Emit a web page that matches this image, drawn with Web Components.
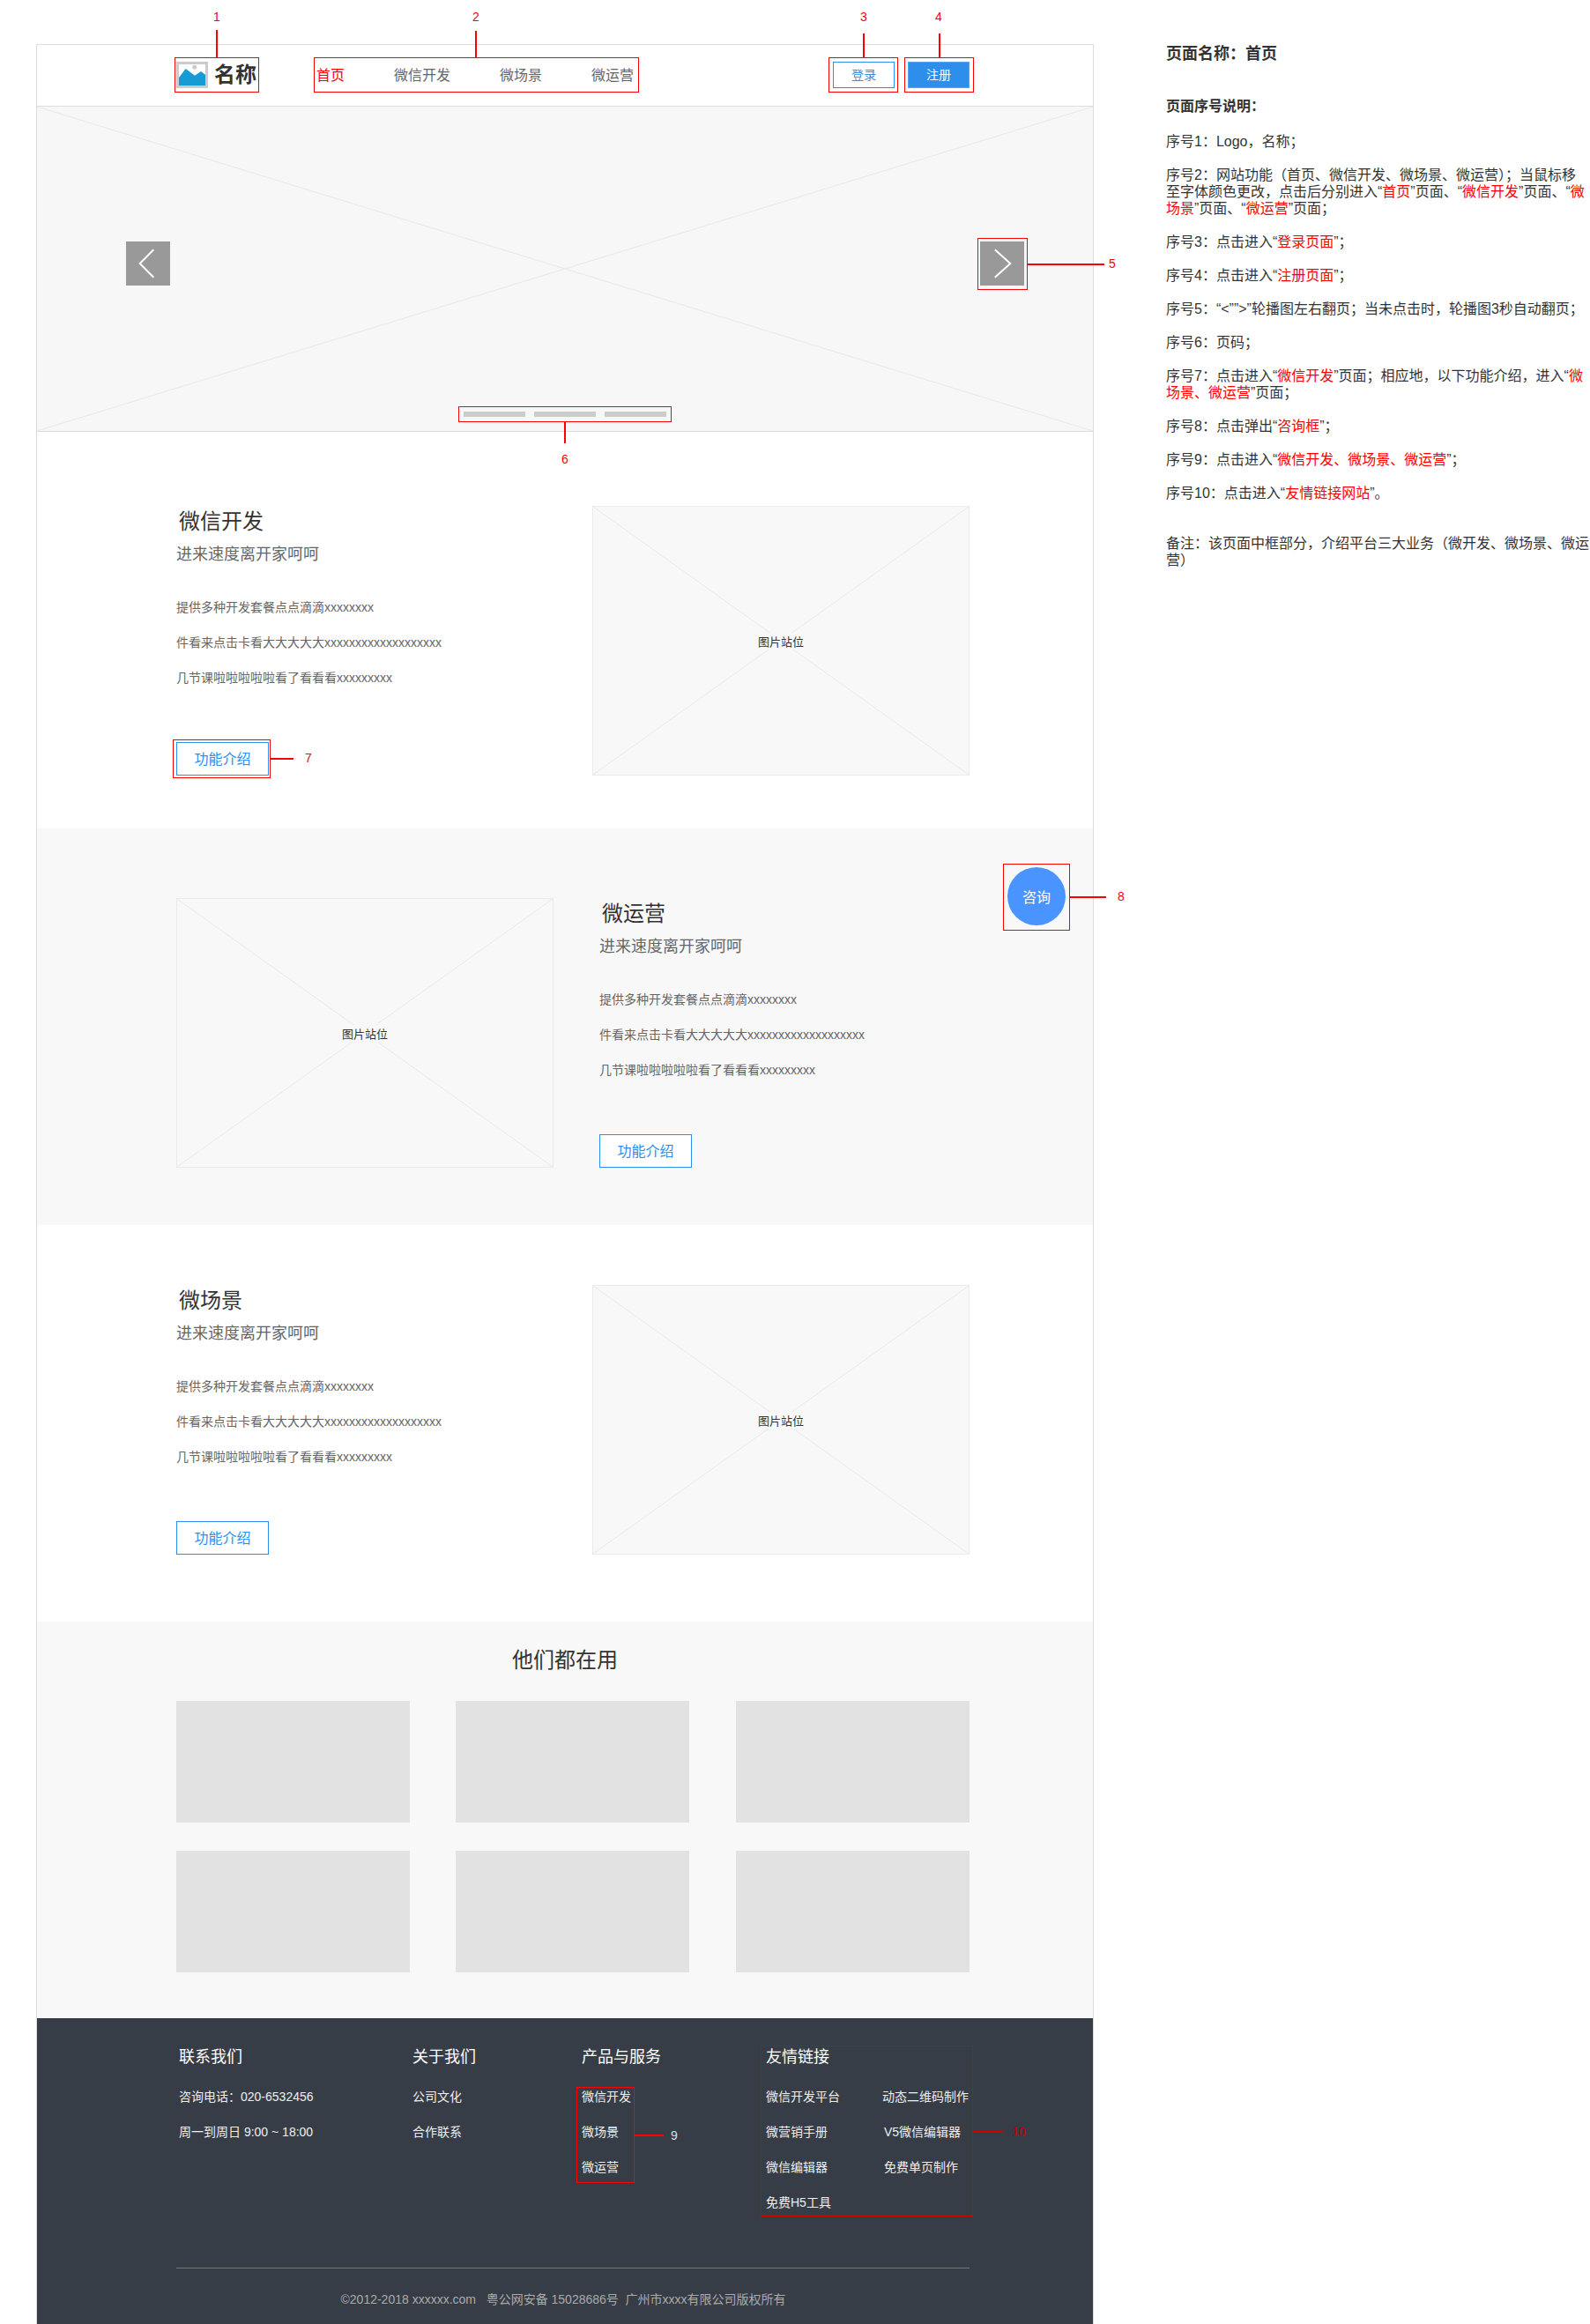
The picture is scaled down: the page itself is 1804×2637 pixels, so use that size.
<!DOCTYPE html>
<html lang="zh-CN">
<head>
<meta charset="utf-8">
<title>首页</title>
<style>
  html, body { margin: 0; padding: 0; background: #fff; }
  body {
    font-family: "Liberation Sans", "Noto Sans CJK SC", sans-serif;
    color: #333;
    width: 1804px;
    height: 2637px;
    overflow: hidden;
    position: relative;
  }
  .sheet { display: flex; align-items: flex-start; }
</style>
</head>
<body>
<div class="sheet">
  <site-frame>
    <site-header></site-header>
    <hero-carousel></hero-carousel>
    <feature-section pad-top="84" pad-bottom="60">
      <span slot="title">微信开发</span>
    </feature-section>
    <feature-section reverse pad-top="79" pad-bottom="65">
      <span slot="title">微运营</span>
    </feature-section>
    <feature-section pad-top="68" pad-bottom="76">
      <span slot="title">微场景</span>
    </feature-section>
    <client-wall></client-wall>
    <site-footer></site-footer>
    <consult-bubble></consult-bubble>
  </site-frame>
  <page-notes></page-notes>
</div>

<!-- red annotation marks, they float over the wireframe -->
<anno-mark box="198,65,96,40" line="246,34,246,65" label="1" at="246,19"></anno-mark>
<anno-mark box="356,65,369,40" line="540,35,540,65" label="2" at="540,19"></anno-mark>
<anno-mark box="940,65,79,40" line="980,38,980,65" label="3" at="980,19"></anno-mark>
<anno-mark box="1026,65,79,40" line="1066,38,1066,65" label="4" at="1065,19"></anno-mark>
<anno-mark box="1109,270,57,59" line="1166,300,1253,300" label="5" at="1262,299"></anno-mark>
<anno-mark box="520,461,242,18" line="641,479,641,503" label="6" at="641,521"></anno-mark>
<anno-mark box="196,839,111,44" line="307,861,333,861" label="7" at="350,860"></anno-mark>
<anno-mark box="1138,980,76,76" line="1214,1018,1255,1018" label="8" at="1272,1017"></anno-mark>
<anno-mark box="654,2368,66,109" line="720,2423,753,2423" label="9" at="765,2423" label-color="#ddd"></anno-mark>
<anno-mark box="863,2321,241,194" line="1104,2419,1138,2419" label="10" at="1156,2419" color="#d40000" label-color="#c00000"></anno-mark>

<script>
const cross = `<svg class="cross" preserveAspectRatio="none" viewBox="0 0 100 100">
  <path d="M0 0L100 100M100 0L0 100" fill="none" stroke="#e8e8e8" stroke-width="1" vector-effect="non-scaling-stroke"/></svg>`;

class SiteFrame extends HTMLElement {
  constructor() {
    super();
    this.attachShadow({ mode: "open" }).innerHTML = `
      <style>
        :host {
          display: block;
          position: relative;
          box-sizing: border-box;
          width: 1200px;
          height: 2587px;
          margin: 50px 0 0 41px;
          border: 1px solid #ddd;
          border-bottom: 0;
          flex: none;
        }
      </style>
      <slot></slot>`;
  }
}

class SiteHeader extends HTMLElement {
  constructor() {
    super();
    this.attachShadow({ mode: "open" }).innerHTML = `
      <style>
        :host {
          display: flex;
          align-items: center;
          box-sizing: border-box;
          height: 70px;
          padding: 0 140px 2px 158px;
          border-bottom: 1px solid #ddd;
          background: #fff;
        }
        .logo { display: flex; align-items: center; width: 159px; flex: none; }
        .logo svg { width: 36px; height: 30px; display: block; }
        .logo b { font-size: 24px; margin-left: 7px; color: #333; line-height: 30px; }
        nav { display: flex; gap: 56px; margin-top: 2px; font-size: 16px; color: #666; line-height: 30px; }
        nav .on { color: #f00; }
        .btns { margin-left: auto; display: flex; gap: 15px; }
        .btn {
          box-sizing: border-box;
          width: 70px;
          height: 30px;
          border: 1px solid #2d8eec;
          color: #2d8eec;
          font-size: 14px;
          line-height: 28px;
          text-align: center;
          background: #fff;
        }
        .btn.solid { background: #2d8eec; border-color: #55a5f0; color: #fff; }
      </style>
      <div class="logo">
        <svg viewBox="0 0 36 30">
          <rect x="1.500" y="1.500" width="33" height="27" fill="#fff" stroke="#ccc" stroke-width="3"/>
          <path d="M3 18L10.700 8L21 15.700L28 11L33 14.700V27H3Z" fill="#169bd5"/>
          <circle cx="20.700" cy="6.300" r="2.500" fill="#ccc"/>
        </svg>
        <b>名称</b>
      </div>
      <nav><span class="on">首页</span><span>微信开发</span><span>微场景</span><span>微运营</span></nav>
      <div class="btns">
        <div class="btn">登录</div>
        <div class="btn solid">注册</div>
      </div>`;
  }
}

class HeroCarousel extends HTMLElement {
  constructor() {
    super();
    this.attachShadow({ mode: "open" }).innerHTML = `
      <style>
        :host {
          display: block;
          position: relative;
          box-sizing: border-box;
          height: 369px;
          background: #f7f7f7;
          border-bottom: 1px solid #ddd;
        }
        .cross { position: absolute; inset: 0; width: 100%; height: 100%; display: block; }
        .arrow { position: absolute; top: 153px; width: 50px; height: 50px; background: #999; display: block; }
        .prev { left: 101px; }
        .next { right: 78px; }
        .pager { position: absolute; left: 484px; top: 346px; display: flex; gap: 10px; }
        .pager i { display: block; width: 70px; height: 6px; background: #ccc; }
      </style>
      ${cross}
      <svg class="arrow prev" viewBox="0 0 50 50"><path d="M31.300 9.300L15.700 25L31.300 40.700" fill="none" stroke="#fff" stroke-width="2"/></svg>
      <svg class="arrow next" viewBox="0 0 50 50"><path d="M16.800 9.300L34.300 25L16.800 40.700" fill="none" stroke="#fff" stroke-width="2"/></svg>
      <div class="pager"><i></i><i></i><i></i></div>`;
  }
}

class FeatureSection extends HTMLElement {
  constructor() {
    super();
    const reverse = this.hasAttribute("reverse");
    const top = this.getAttribute("pad-top");
    const bottom = this.getAttribute("pad-bottom");
    const copy = `
      <div class="copy">
        <h2><slot name="title"></slot></h2>
        <h3>进来速度离开家呵呵</h3>
        <ul>
          <li>提供多种开发套餐点点滴滴xxxxxxxx</li>
          <li>件看来点击卡看大大大大大xxxxxxxxxxxxxxxxxxx</li>
          <li>几节课啦啦啦啦啦看了看看看xxxxxxxxx</li>
        </ul>
        <div class="more">功能介绍</div>
      </div>`;
    const pic = `<div class="pic">${cross}<span>图片站位</span></div>`;
    this.attachShadow({ mode: "open" }).innerHTML = `
      <style>
        :host {
          display: grid;
          grid-template-columns: ${reverse ? "428px 470px" : "472px 428px"};
          padding: ${top}px 0 ${bottom}px 158px;
          background: ${reverse ? "#f8f8f8" : "#fff"};
        }
        .copy { padding-left: ${reverse ? 52 : 0}px; }
        h2 { margin: 1px 0 0 3px; font-size: 24px; font-weight: 400; line-height: 34px; color: #333; }
        h3 { margin: 7px 0 0; font-size: 18px; font-weight: 400; line-height: 26px; color: #666; }
        ul { margin: 27px 0 0; padding: 0; list-style: none; font-size: 14px; line-height: 40px; color: #666; }
        .more {
          box-sizing: border-box;
          width: 105px;
          height: 38px;
          margin-top: 53px;
          border: 1px solid #2d8eec;
          background: #fff;
          color: #2d8eec;
          font-size: 16px;
          line-height: 37px;
          text-align: center;
        }
        .pic {
          position: relative;
          box-sizing: border-box;
          height: 306px;
          background: #f8f8f8;
          border: 1px solid #ebebeb;
          display: flex;
          align-items: center;
          justify-content: center;
          font-size: 13px;
          color: #333;
        }
        .pic .cross { position: absolute; inset: 0; width: 100%; height: 100%; display: block; }
        .pic span { position: relative; background: #f8f8f8; padding: 0 1px; }
      </style>
      ${reverse ? pic + copy : copy + pic}`;
  }
}

class ClientWall extends HTMLElement {
  constructor() {
    super();
    this.attachShadow({ mode: "open" }).innerHTML = `
      <style>
        :host { display: block; box-sizing: border-box; height: 450px; padding: 26px 140px 0 158px; background: #f8f8f8; }
        h2 { margin: 0 18px 0 0; font-size: 24px; font-weight: 400; line-height: 36px; text-align: center; color: #333; }
        .grid { display: grid; grid-template-columns: 317px 318px 265px; row-gap: 32px; margin-top: 28px; }
        .grid i { display: block; width: 265px; height: 138px; background: #e2e2e2; }
      </style>
      <h2>他们都在用</h2>
      <div class="grid"><i></i><i></i><i></i><i></i><i></i><i></i></div>`;
  }
}

class SiteFooter extends HTMLElement {
  constructor() {
    super();
    this.attachShadow({ mode: "open" }).innerHTML = `
      <style>
        :host { display: block; box-sizing: border-box; height: 347px; padding: 31px 140px 0 158px; background: #373d46; color: #fff; }
        .cols { display: flex; height: 252px; }
        .col { flex: none; padding-left: 3px; box-sizing: border-box; }
        h4 { margin: 0 0 12px; font-size: 18px; font-weight: 400; line-height: 26px; color: #fff; }
        .row { font-size: 14px; line-height: 40px; color: #eee; white-space: nowrap; }
        .two { display: grid; grid-template-columns: 132px auto; }
        .hr { height: 1px; background: #777; }
        .copy { margin-top: 20px; margin-left: 186.500px; font-size: 14px; line-height: 30px; color: #aaa; white-space: pre; }
      </style>
      <div class="cols">
        <div class="col" style="width:265px"><h4>联系我们</h4>
          <div class="row">咨询电话：020-6532456</div>
          <div class="row">周一到周日 9:00 ~ 18:00</div></div>
        <div class="col" style="width:192px"><h4>关于我们</h4>
          <div class="row">公司文化</div>
          <div class="row">合作联系</div></div>
        <div class="col" style="width:209px"><h4>产品与服务</h4>
          <div class="row">微信开发</div>
          <div class="row">微场景</div>
          <div class="row">微运营</div></div>
        <div class="col" style="width:231px"><h4>友情链接</h4>
          <div class="two">
            <div class="row">微信开发平台</div><div class="row">动态二维码制作</div>
            <div class="row">微营销手册</div><div class="row" style="padding-left:2px">V5微信编辑器</div>
            <div class="row">微信编辑器</div><div class="row" style="padding-left:2px">免费单页制作</div>
            <div class="row">免费H5工具</div>
          </div></div>
      </div>
      <div class="hr"></div>
      <div class="copy">©2012-2018 xxxxxx.com   粤公网安备 15028686号  广州市xxxx有限公司版权所有</div>`;
  }
}

class ConsultBubble extends HTMLElement {
  constructor() {
    super();
    this.attachShadow({ mode: "open" }).innerHTML = `
      <style>
        :host {
          position: absolute;
          left: 1101px;
          top: 933px;
          width: 66px;
          height: 66px;
          border-radius: 50%;
          background: #4a94ff;
          color: #fff;
          font-size: 16px;
          display: flex;
          align-items: center;
          justify-content: center;
        }
      </style>
      咨询`;
  }
}

class PageNotes extends HTMLElement {
  constructor() {
    super();
    this.attachShadow({ mode: "open" }).innerHTML = `
      <style>
        :host {
          display: block;
          box-sizing: border-box;
          width: 482px;
          margin-left: 82px;
          padding-top: 50px;
          font-size: 16px;
          line-height: 19px;
          color: #333;
          flex: none;
        }
        h1 { margin: 0; font-size: 18px; line-height: 22px; font-weight: 700; }
        h2 { margin: 38px 0 0; font-size: 16px; line-height: 22px; font-weight: 700; }
        p { margin: 19px 0 0; }
        p.first { margin-top: 19px; }
        p.memo { margin-top: 38px; }
        em { font-style: normal; color: #f00; }
      </style>
      <h1>页面名称：首页</h1>
      <h2>页面序号说明：</h2>
      <p class="first">序号1：Logo，名称；</p>
      <p>序号2：网站功能（首页、微信开发、微场景、微运营）；当鼠标移<br>至字体颜色更改，点击后分别进入“<em>首页</em>”页面、“<em>微信开发</em>”页面、“<em>微</em><br><em>场景</em>”页面、“<em>微运营</em>”页面；</p>
      <p>序号3：点击进入“<em>登录页面</em>”；</p>
      <p>序号4：点击进入“<em>注册页面</em>”；</p>
      <p>序号5：“&lt;””&gt;”轮播图左右翻页；当未点击时，轮播图3秒自动翻页；</p>
      <p>序号6：页码；</p>
      <p>序号7：点击进入“<em>微信开发</em>”页面；相应地，以下功能介绍，进入“<em>微</em><br><em>场景、微运营</em>”页面；</p>
      <p>序号8：点击弹出“<em>咨询框</em>”；</p>
      <p>序号9：点击进入“<em>微信开发、微场景、微运营</em>”；</p>
      <p>序号10：点击进入“<em>友情链接网站</em>”。</p>
      <p class="memo">备注：该页面中框部分，介绍平台三大业务（微开发、微场景、微运<br>营）</p>`;
  }
}

// box = x,y,w,h  line = x1,y1,x2,y2  at = centre of the label, all in page pixels
class AnnoMark extends HTMLElement {
  connectedCallback() {
    const [x, y, w, h] = this.getAttribute("box").split(",").map(Number);
    const [x1, y1, x2, y2] = this.getAttribute("line").split(",").map(Number);
    const [lx, ly] = this.getAttribute("at").split(",").map(Number);
    const color = this.getAttribute("color") || "#f00";
    const labelColor = this.getAttribute("label-color") || "#f00";
    const lineBox = x1 === x2
      ? `left:${x1 - 1}px;top:${y1}px;width:2px;height:${y2 - y1}px`
      : `left:${x1}px;top:${y1 - 1}px;width:${x2 - x1}px;height:2px`;
    this.attachShadow({ mode: "open" }).innerHTML = `
      <style>
        :host { display: block; position: absolute; left: 0; top: 0; width: 0; height: 0; }
        div { position: absolute; box-sizing: border-box; }
        .box { border: 1px solid ${color}; }
        .line { background: ${color}; }
        .label { width: 40px; height: 20px; line-height: 20px; text-align: center; font-size: 14px; color: ${labelColor}; }
      </style>
      <div class="box" style="left:${x}px;top:${y}px;width:${w}px;height:${h}px"></div>
      <div class="line" style="${lineBox}"></div>
      <div class="label" style="left:${lx - 20}px;top:${ly - 10}px">${this.getAttribute("label")}</div>`;
  }
}

customElements.define("site-frame", SiteFrame);
customElements.define("site-header", SiteHeader);
customElements.define("hero-carousel", HeroCarousel);
customElements.define("feature-section", FeatureSection);
customElements.define("client-wall", ClientWall);
customElements.define("site-footer", SiteFooter);
customElements.define("consult-bubble", ConsultBubble);
customElements.define("page-notes", PageNotes);
customElements.define("anno-mark", AnnoMark);
</script>
</body>
</html>
